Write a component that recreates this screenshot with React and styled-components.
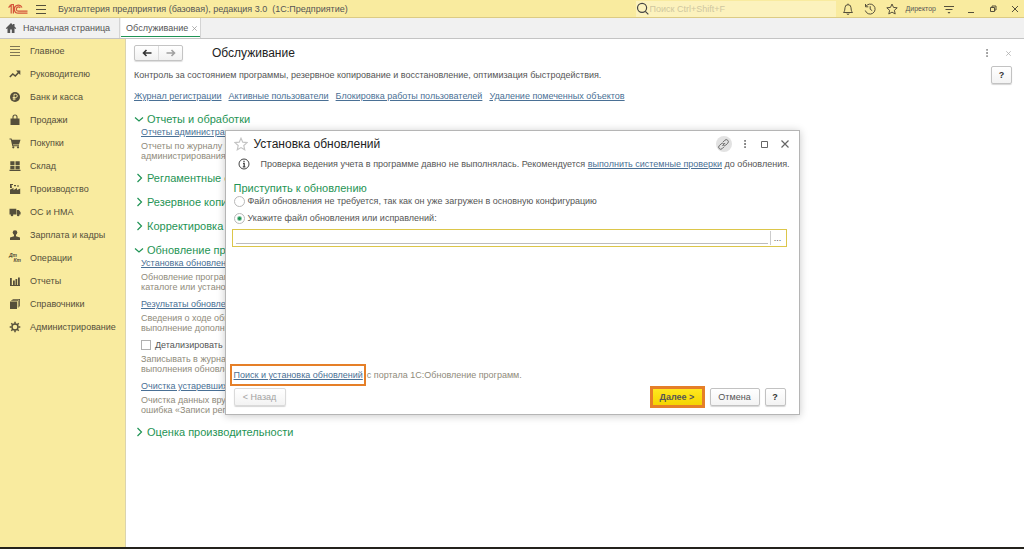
import React, { useState } from "react";
import styled, { createGlobalStyle, css } from "styled-components";

const color = {
  yellow: "#f9eb9f",
  yellowLine: "#dccb85",
  field: "#fcf2bd",
  text: "#555555",
  muted: "#8f8b7b",
  link: "#4a7095",
  green: "#1f9455",
  orange: "#e57f28",
  line: "#c4c4c4",
  icon: "#554f3b",
};

const GlobalStyle = createGlobalStyle`
  *, *::before, *::after { box-sizing: border-box; }
  html, body, #root { height: 100%; }
  body {
    margin: 0;
    background: #fff;
    color: ${color.text};
    font: 9px/12px "Liberation Sans", Arial, sans-serif;
  }
  button, input { font: inherit; color: inherit; }
  h1, h2, p, ul { margin: 0; padding: 0; font-weight: normal; }
`;

/* ---------- shell ---------- */

const Page = styled.div`
  position: relative;
  display: flex;
  flex-direction: column;
  min-height: 100%;
  border-bottom: 2px solid #24221c;
`;

const TitleBar = styled.header`
  display: flex;
  align-items: center;
  height: 18px;
  padding: 0 3px 0 8px;
  background: ${color.yellow};
  border-bottom: 1px solid ${color.yellowLine};
`;

const AppName = styled.span`
  flex: 1;
  padding-left: 11px;
  white-space: pre;
`;

const Search = styled.label`
  display: flex;
  align-items: center;
  gap: 1px;
  width: 200px;
  height: 16px;
  background: ${color.field};
  margin-right: 6px;
`;

const SearchInput = styled.input`
  flex: 1;
  min-width: 0;
  padding: 0;
  border: 0;
  outline: 0;
  background: transparent;
  &::placeholder { color: #cfc7a0; opacity: 1; }
`;

const BarTools = styled.div`
  display: flex;
  align-items: center;
  gap: 10px;
`;

const WindowTools = styled.div`
  display: flex;
  align-items: center;
  gap: 10px;
  margin-left: 10px;
`;

const IconButton = styled.button`
  display: flex;
  align-items: center;
  justify-content: center;
  width: ${(p) => p.$size || 12}px;
  height: ${(p) => p.$size || 12}px;
  padding: 0;
  border: 0;
  border-radius: 50%;
  background: ${(p) => (p.$filled ? "#e2e2e2" : "transparent")};
  color: ${(p) => p.$color || color.icon};
`;

const MenuButton = styled(IconButton)`
  margin-left: 7px;
`;

const UserButton = styled.button`
  padding: 0;
  border: 0;
  background: transparent;
  font-size: 7px;
  margin: 0 -3px 0 -2px;
`;

const Tabs = styled.nav`
  display: flex;
  height: 21px;
  background: #f1f1f1;
  border-bottom: 1px solid ${color.line};
`;

const Tab = styled.div`
  display: flex;
  align-items: center;
  gap: ${(p) => (p.$active ? 2 : 6)}px;
  padding: ${(p) => (p.$active ? "0 1px 0 5px" : "0 9px 0 5px")};
  border-right: 1px solid #d4d4d4;
  ${(p) =>
    p.$active &&
    css`
      margin-left: 1px;
      background: #fff;
      box-shadow: inset 0 -1px 0 #fff, inset 0 -2px 0 ${color.green};
    `}
`;

const TabLink = styled.a`
  color: inherit;
  text-decoration: none;
`;

const Body = styled.div`
  display: flex;
  flex: 1;
`;

const Sidebar = styled.nav`
  flex: none;
  width: 126px;
  background: ${color.yellow};
  border-right: 1px solid #dbd4ae;
`;

const SideLink = styled.a`
  display: flex;
  align-items: center;
  gap: 9px;
  height: 23px;
  padding-left: 9px;
  color: ${color.icon};
  text-decoration: none;
`;

/* ---------- page content ---------- */

const Content = styled.main`
  flex: 1;
  min-width: 0;
  padding: 5px 12px 20px 8px;
`;

const Head = styled.div`
  display: flex;
  align-items: center;
  height: 18px;
`;

const History = styled.div`
  display: flex;
  width: 49px;
  height: 16px;
  border: 1px solid ${color.line};
  border-radius: 2px;
  background: linear-gradient(#fff, #f1f1f1);
  box-shadow: 0 1px 1px #ddd;
`;

const HistoryButton = styled.button`
  flex: 1;
  display: flex;
  align-items: center;
  justify-content: center;
  padding: 0;
  border: 0;
  background: transparent;
  color: ${(p) => (p.disabled ? "#a0a0a0" : "#333")};
  & + & { border-left: 1px solid #ddd; }
`;

const PageTitle = styled.h1`
  flex: 1;
  margin-left: 29px;
  color: #222;
  font-size: 12px;
  line-height: 18px;
`;

const HeadTools = styled.div`
  display: flex;
  gap: 9px;
  margin-right: -2px;
`;

const Intro = styled.div`
  display: flex;
  align-items: flex-start;
  justify-content: space-between;
  height: 28px;
  padding-top: 4px;
`;

const IntroText = styled.p`
  padding-top: 3px;
`;

const Button = styled.button`
  height: 18px;
  min-width: ${(p) => p.$width}px;
  padding: 0;
  border: 1px solid #c2c2c2;
  border-radius: 2px;
  background: linear-gradient(#fff, #f3f3f3);
  box-shadow: 0 1px 1px #d6d6d6;
  &:disabled {
    color: #a2a2a2;
    border-color: #dadada;
  }
  ${(p) =>
    p.$bold &&
    css`
      font-weight: bold;
      color: #333;
    `}
  ${(p) =>
    p.$primary &&
    css`
      height: 22px;
      font-weight: bold;
      border: 3px solid ${color.orange};
      border-radius: 0;
      background: linear-gradient(#ffe81f, #f5d400) padding-box;
      box-shadow: none;
    `}
`;

const LinkRow = styled.div`
  display: flex;
  gap: 7px;
  margin-bottom: 10px;
`;

const Link = styled.a`
  color: ${color.link};
  text-decoration: underline;
  text-underline-offset: 1px;
`;

const Sections = styled.div`
  display: flex;
  flex-direction: column;
  gap: 10px;
`;

const SectionToggle = styled.button`
  display: flex;
  align-items: center;
  gap: 3px;
  padding: 0;
  border: 0;
  background: transparent;
  color: ${color.green};
  font-size: 11px;
  line-height: 14px;
  white-space: nowrap;
`;

const Items = styled.div`
  display: flex;
  flex-direction: column;
  gap: 6px;
  padding-left: 7px;
  white-space: nowrap;
`;

const Note = styled.p`
  margin-top: 3px;
  color: ${color.muted};
  line-height: 10px;
`;

const CheckLabel = styled.label`
  display: flex;
  align-items: center;
  gap: 4px;
  height: 12px;
`;

const CheckBox = styled.input`
  appearance: none;
  width: 10px;
  height: 10px;
  margin: 0;
  border: 1px solid #b0b0b0;
  background: #fff;
`;

/* ---------- dialog ---------- */

const Overlay = styled.div`
  position: absolute;
  inset: 0;
  display: flex;
  align-items: flex-start;
  justify-content: center;
  padding-top: 130px;
`;

const Dialog = styled.section`
  display: flex;
  flex-direction: column;
  width: 575px;
  min-height: 285px;
  padding: 3px 7px 6px 8px;
  background: #fff;
  border: 1px solid #b5b5b5;
  box-shadow: 0 1px 8px rgba(0, 0, 0, 0.22);
`;

const DialogHead = styled.div`
  display: flex;
  align-items: center;
  height: 20px;
`;

const DialogTitle = styled.h2`
  flex: 1;
  margin-left: 6px;
  color: #222;
  font-size: 12px;
  line-height: 18px;
`;

const DialogTools = styled.div`
  display: flex;
  align-items: center;
  gap: 6px;
`;

const Notice = styled.div`
  display: flex;
  align-items: center;
  gap: 11px;
  padding: 4px 0 0 4px;
`;

const GroupTitle = styled.h2`
  margin-top: 11px;
  color: ${color.green};
  font-size: 11px;
  line-height: 14px;
`;

const RadioLabel = styled.label`
  display: flex;
  align-items: center;
  gap: 3px;
  margin-bottom: 5px;
`;

const Radio = styled.input`
  appearance: none;
  width: 11px;
  height: 11px;
  margin: 0;
  border: 1px solid #b8b8b8;
  border-radius: 50%;
  background: #fff;
  &:checked {
    background: radial-gradient(circle, ${color.green} 0 1px, #fff 3px);
  }
`;

const FileField = styled.div`
  display: flex;
  height: 18px;
  margin-right: 5px;
  margin-left: -2px;
  padding: 1px;
  border: 1px solid #dcc64a;
`;

const FileInput = styled.input`
  flex: 1;
  min-width: 0;
  margin: 0 2px 1px;
  padding: 0;
  border: 0;
  border-bottom: 1px solid #bdbdbd;
  outline: 0;
`;

const BrowseButton = styled.button`
  width: 15px;
  padding: 0;
  border: 0;
  border-left: 1px solid #ccc;
  background: #fff;
  line-height: 12px;
`;

const PortalLine = styled.p`
  display: flex;
  align-items: center;
  margin: auto 0 0 -4px;
  color: ${color.muted};
`;

const Highlight = styled.span`
  display: flex;
  align-items: center;
  height: 22px;
  margin-right: 1px;
  padding: 0 1px 0 2px;
  border: 2px solid ${color.orange};
`;

const Footer = styled.div`
  display: flex;
  align-items: center;
  gap: 5px;
  height: 22px;
  padding-right: 6px;
`;

const Spacer = styled.span`
  flex: 1;
`;

/* ---------- icons ---------- */

const Svg = ({ size = 12, width, height, box = "0 0 12 12", fill = "none", stroke = "currentColor", sw = 1, children }) => (
  <svg width={width || size} height={height || size} viewBox={box} fill={fill} stroke={stroke} strokeWidth={sw} aria-hidden="true">
    {children}
  </svg>
);
const Solid = ({ children }) => (
  <Svg fill="currentColor" stroke="none">{children}</Svg>
);

const Logo = () => (
  <Svg width={20} height={12} box="0 0 20 12" stroke="#d4553a" sw={1.2}>
    <path d="M.5 4.500 3.200 2.300V10.500M1.500 2.500 4.200 1.500H5.400V10.500" />
    <path d="M14 4.600A4 4 0 1 0 10.500 10.200H19.500" />
    <path d="M12.200 5A2.100 2.100 0 1 0 10.500 8.200H19.500" />
  </Svg>
);
const Menu = () => <Svg><path d="M1 2.500h10M1 6.500h10M1 10.500h10" /></Svg>;
const SearchIcon = () => <Svg size={13} stroke="#444" sw={1.1}><circle cx="5.600" cy="5.400" r="4.200" /><path d="m8.600 8.600 2.800 2.800" /></Svg>;
const Bell = () => <Svg><path d="M1.500 9.500h9C9 8 9.300 6.500 9 4.700A3 3 0 0 0 3 4.700C2.700 6.500 3 8 1.500 9.500ZM5 10.500a1 1 0 0 0 2 0M6 .6v1.200" /></Svg>;
const Clock = () => <Svg><path d="M1.800 3.500A5 5 0 1 1 1.300 7.500M1.500 1v2.800h2.800M6.200 3.200v3l2 1.500" /></Svg>;
const Star = ({ size = 12 }) => <Svg size={size}><path d="m6 1 1.500 3.400 3.700.4-2.800 2.500.8 3.700L6 9.100 2.800 11l.8-3.700L.8 4.800l3.700-.4Z" /></Svg>;
const Filter = () => <Svg><path d="M1 3.500h10M2.500 6.500h7" /><path d="M4.500 9h3L6 10.800Z" fill="currentColor" stroke="none" /></Svg>;
const Minimize = () => <Svg><path d="M3 9.500h6" /></Svg>;
const Restore = () => <Svg><path d="M3.500 4.500h4v4h-4ZM5 4.500V3h4v4H7.500" /></Svg>;
const Maximize = () => <Svg><path d="M2.500 3.500h6v6h-6z" /></Svg>;
const Close = ({ size = 12 }) => <Svg size={size}><path d="m3 3 6 6M9 3 3 9" /></Svg>;
const Dots = () => <Solid><path d="M5.300 2h1.500v1.800H5.300zM5.300 5.100h1.500v1.800H5.300zM5.300 8.200h1.500V10H5.300z" /></Solid>;
const Home = () => <Solid><path d="M6 1 .8 6.200l.8.8.9-.8V11h2.700V7.500h1.600V11h2.700V6.200l.9.800.8-.8-1.700-1.700V2H8v1Z" /></Solid>;
const Arrow = ({ flip }) => <Svg><path d={flip ? "M1.500 6h8M6.500 3l3 3-3 3" : "M10.500 6h-8M5.500 3l-3 3 3 3"} strokeWidth="1.600" /></Svg>;
const Chevron = ({ open }) => <Svg size={10} box="0 0 10 10" sw={1.2}><path d={open ? "m1 3.500 4 3.500 4-3.500" : "m3.500 1 4 4-4 4"} /></Svg>;
const Info = () => <Svg stroke="#444"><circle cx="6" cy="6" r="5" /><path d="M6 2.700v1.300M5 5.300h1.200v3.500M4.800 8.900h2.600" strokeWidth="1.300" /></Svg>;
const Chain = () => <Svg size={13}><path d="m5 7.200 2.500-2.600M5.500 3.800 7.200 2.100a1.900 1.900 0 0 1 2.700 2.700L8.200 6.500a1.800 1.800 0 0 1-2.500 0M6.500 8.100 4.800 9.800a1.900 1.900 0 0 1-2.700-2.700l1.700-1.700a1.800 1.800 0 0 1 2.500 0" strokeWidth=".9" /></Svg>;

const sideIcons = {
  list: <Svg><path d="M1 1.500h10M1 4.500h10M1 7.500h10M1 10.500h10" strokeOpacity=".75" /></Svg>,
  trend: <Svg><path d="m.8 9 3-3 2.500 2L10 4" strokeWidth="1.500" /><path d="M7 2.500h4.300V7Z" fill="currentColor" stroke="none" /></Svg>,
  ruble: <Svg><circle cx="6" cy="6" r="5" fill="currentColor" stroke="none" /><path d="M5 9.300V3.300h1.700a1.600 1.600 0 0 1 0 3.200H3.700M3.700 8h3" stroke={color.yellow} strokeWidth=".9" /></Svg>,
  bag: <Svg><path d="M1.500 4.500h9V11h-9z" fill="currentColor" stroke="none" /><path d="M4 6V3a2 2 0 0 1 4 0v3" strokeWidth="1.100" /></Svg>,
  cart: <Solid><path d="M.5 1.500h2l.5 1.300h8.500L10 7.500H4l.2.800H10v1H3.300L1.800 2.500H.5Z" /><circle cx="4.300" cy="10.300" r="1.100" /><circle cx="9" cy="10.300" r="1.100" /></Solid>,
  store: <Solid><path d="M1.300 1.200h4.200V5H1.300zM6.500 1.200h4.200V5H6.500zM1.300 5.700h4.200v3.500H1.300zM6.500 5.700h4.200v3.500H6.500zM.5 9.800h11v1.200H.5z" /></Solid>,
  factory: <Solid><path d="M1 11V6.500L4.500 5v2L8 5v2l3.200-1.600V11ZM1 1h3v1H2.500l.5 3H1ZM5 2h2v1.300H5zM8 2.500h2v1H8z" /></Solid>,
  truck: <Solid><path d="M.5 2.800h6.800v5.700H.5zM7.800 4h2l1.800 2.200v2.300H7.800z" /><circle cx="3" cy="9" r="1.300" /><circle cx="9.200" cy="9" r="1.300" /></Solid>,
  person: <Solid><circle cx="6" cy="3.500" r="2.300" /><path d="M5 5h2v2.200l4 1.300V11H1V8.500l4-1.300Z" /></Solid>,
  chart: <Solid><path d="M1 3h1.800v7H1zM4 5.500h1.800V10H4zM6.500 4h1.700v6H6.500zM9 2.500h1.800V10H9zM1 10h10v1H1z" /></Solid>,
  books: <Solid><path d="M1 3.500h7V11H1zM2.300 2.200h7.300v7.300h-.8V3H2.300zM3.500 1H11v7.500h-.8V1.700H3.500z" /></Solid>,
  gear: <Svg><circle cx="6" cy="6" r="3" strokeWidth="1.400" /><path d="M6 .7v2M6 9.300v2M.7 6h2M9.300 6h2M2.300 2.300l1.400 1.400M8.300 8.300l1.400 1.400M2.300 9.700l1.400-1.400M8.300 3.700l1.400-1.400" strokeWidth="1.500" /></Svg>,
};

const Ledger = styled.span`
  display: flex;
  flex-direction: column;
  width: 12px;
  font: italic bold 5px/5px "Liberation Sans", Arial, sans-serif;
  & > :last-child { align-self: flex-end; }
`;

const menu = [
  ["list", "Главное"],
  ["trend", "Руководителю"],
  ["ruble", "Банк и касса"],
  ["bag", "Продажи"],
  ["cart", "Покупки"],
  ["store", "Склад"],
  ["factory", "Производство"],
  ["truck", "ОС и НМА"],
  ["person", "Зарплата и кадры"],
  ["ledger", "Операции"],
  ["chart", "Отчеты"],
  ["books", "Справочники"],
  ["gear", "Администрирование"],
];

const Section = ({ title, open, children }) => (
  <section>
    <SectionToggle aria-expanded={!!open}>
      <Chevron open={open} />
      {title}
    </SectionToggle>
    {open && <Items>{children}</Items>}
  </section>
);

const Item = ({ link, lines }) => (
  <div>
    <Link href="#">{link}</Link>
    <Note>{lines[0]}<br />{lines[1]}</Note>
  </div>
);

function UpdateDialog() {
  const [mode, setMode] = useState("file");
  return (
    <Overlay>
      <Dialog role="dialog" aria-labelledby="dialog-title">
        <DialogHead>
          <IconButton $size={14} $color="#c4c4c4" aria-label="В избранное"><Star size={14} /></IconButton>
          <DialogTitle id="dialog-title">Установка обновлений</DialogTitle>
          <DialogTools>
            <IconButton $size={16} $filled $color="#666" aria-label="Ссылка"><Chain /></IconButton>
            <IconButton $size={14} $color="#666" aria-label="Еще"><Dots /></IconButton>
            <IconButton $size={14} $color="#666" aria-label="Развернуть"><Maximize /></IconButton>
            <IconButton $size={14} $color="#666" aria-label="Закрыть"><Close size={14} /></IconButton>
          </DialogTools>
        </DialogHead>
        <Notice>
          <Info />
          <p>
            Проверка ведения учета в программе давно не выполнялась. Рекомендуется{" "}
            <Link href="#">выполнить системные проверки</Link> до обновления.
          </p>
        </Notice>
        <GroupTitle>Приступить к обновлению</GroupTitle>
        <RadioLabel>
          <Radio type="radio" name="mode" checked={mode === "loaded"} onChange={() => setMode("loaded")} />
          Файл обновления не требуется, так как он уже загружен в основную конфигурацию
        </RadioLabel>
        <RadioLabel>
          <Radio type="radio" name="mode" checked={mode === "file"} onChange={() => setMode("file")} />
          Укажите файл обновления или исправлений:
        </RadioLabel>
        <FileField>
          <FileInput type="text" aria-label="Файл обновления" />
          <BrowseButton aria-label="Выбрать файл">...</BrowseButton>
        </FileField>
        <PortalLine>
          <Highlight><Link href="#">Поиск и установка обновлений</Link></Highlight>
          с портала 1С:Обновление программ.
        </PortalLine>
        <Footer>
          <Button $width={52} disabled>&lt; Назад</Button>
          <Spacer />
          <Button $width={55} $primary>Далее &gt;</Button>
          <Button $width={50}>Отмена</Button>
          <Button $width={21} $bold>?</Button>
        </Footer>
      </Dialog>
    </Overlay>
  );
}

export default function App() {
  return (
    <Page>
      <GlobalStyle />
      <TitleBar>
        <Logo />
        <MenuButton aria-label="Меню"><Menu /></MenuButton>
        <AppName>Бухгалтерия предприятия (базовая), редакция 3.0  (1С:Предприятие)</AppName>
        <Search>
          <SearchIcon />
          <SearchInput type="search" placeholder="Поиск Ctrl+Shift+F" aria-label="Поиск" />
        </Search>
        <BarTools>
          <IconButton aria-label="Уведомления"><Bell /></IconButton>
          <IconButton aria-label="История"><Clock /></IconButton>
          <IconButton aria-label="Избранное"><Star /></IconButton>
          <UserButton>Директор</UserButton>
          <IconButton aria-label="Настройки"><Filter /></IconButton>
        </BarTools>
        <WindowTools>
          <IconButton aria-label="Свернуть"><Minimize /></IconButton>
          <IconButton aria-label="Восстановить"><Restore /></IconButton>
          <IconButton aria-label="Закрыть"><Close /></IconButton>
        </WindowTools>
      </TitleBar>
      <Tabs>
        <Tab><Home /><TabLink href="#">Начальная страница</TabLink></Tab>
        <Tab $active>
          <TabLink href="#" aria-current="page">Обслуживание</TabLink>
          <IconButton $size={9} $color="#999" aria-label="Закрыть вкладку"><Close size={9} /></IconButton>
        </Tab>
      </Tabs>
      <Body>
        <Sidebar>
          {menu.map(([icon, label]) => (
            <SideLink href="#" key={label}>
              {icon === "ledger" ? <Ledger><span>Дт</span><span>Кт</span></Ledger> : sideIcons[icon]}
              {label}
            </SideLink>
          ))}
        </Sidebar>
        <Content>
          <Head>
            <History>
              <HistoryButton aria-label="Назад"><Arrow /></HistoryButton>
              <HistoryButton aria-label="Вперед" disabled><Arrow flip /></HistoryButton>
            </History>
            <PageTitle>Обслуживание</PageTitle>
            <HeadTools>
              <IconButton $color="#888" aria-label="Еще"><Dots /></IconButton>
              <IconButton $color="#aaa" aria-label="Закрыть"><Close size={9} /></IconButton>
            </HeadTools>
          </Head>
          <Intro>
            <IntroText>
              Контроль за состоянием программы, резервное копирование и восстановление, оптимизация быстродействия.
            </IntroText>
            <Button $width={21} $bold>?</Button>
          </Intro>
          <LinkRow>
            <Link href="#">Журнал регистрации</Link>
            <Link href="#">Активные пользователи</Link>
            <Link href="#">Блокировка работы пользователей</Link>
            <Link href="#">Удаление помеченных объектов</Link>
          </LinkRow>
          <Sections>
            <Section title="Отчеты и обработки" open>
              <Item link="Отчеты администратора" lines={["Отчеты по журналу работ", "администрирования"]} />
            </Section>
            <Section title="Регламентные операции" />
            <Section title="Резервное копирование" />
            <Section title="Корректировка данных" />
            <Section title="Обновление программы" open>
              <Item link="Установка обновлений" lines={["Обновление программы", "каталоге или установка"]} />
              <Item link="Результаты обновления" lines={["Сведения о ходе обновления", "выполнение дополнительных"]} />
              <div>
                <CheckLabel><CheckBox type="checkbox" />Детализировать</CheckLabel>
                <Note>Записывать в журнал<br />выполнения обновления</Note>
              </div>
              <Item link="Очистка устаревших" lines={["Очистка данных вручную", "ошибка «Записи регистра»"]} />
            </Section>
            <Section title="Оценка производительности" />
          </Sections>
        </Content>
      </Body>
      <UpdateDialog />
    </Page>
  );
}
